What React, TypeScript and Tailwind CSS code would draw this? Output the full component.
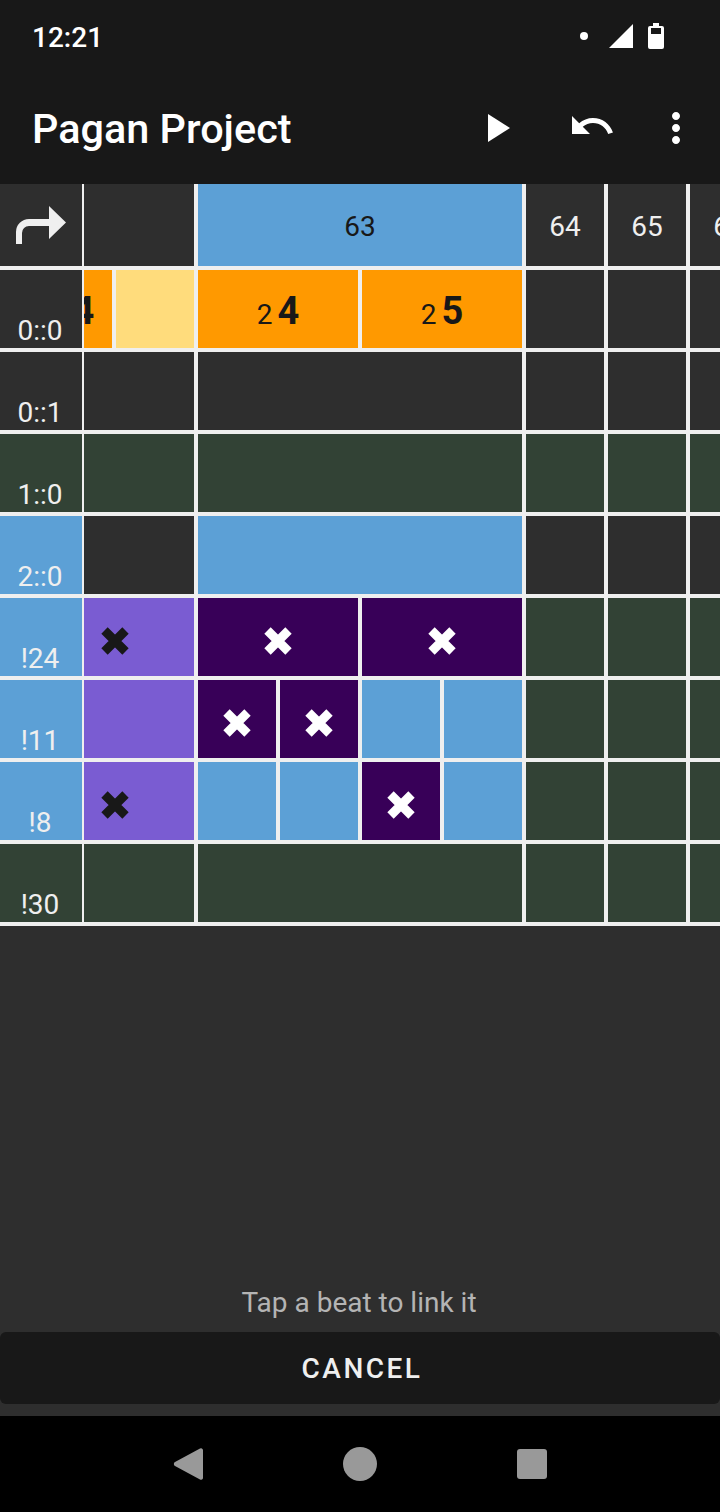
import type { ReactNode } from 'react'

type Tone = 'dark' | 'green' | 'blue' | 'orange' | 'pale' | 'purple' | 'plum'

const TONES: Record<Tone, string> = {
  dark: 'bg-[#2e2e2e]',
  green: 'bg-[#324235]',
  blue: 'bg-[#5ca0d6]',
  orange: 'bg-[#ff9900]',
  pale: 'bg-[#ffdc7c]',
  purple: 'bg-[#7a5cd2]',
  plum: 'bg-[#380058]',
}

function Cross({ color }: { color: string }) {
  return (
    <svg viewBox="0 0 28 28" className="w-7 h-7 mt-2 shrink-0" style={{ color }}>
      <path d="M3.5 3.5 24.5 24.5M24.5 3.5 3.5 24.5" stroke="currentColor" strokeWidth="9" fill="none" />
    </svg>
  )
}

function Note({ octave, pitch }: { octave: string; pitch: string }) {
  return (
    <span className="flex items-baseline text-[#181818] leading-none pt-[4px]">
      <span className="text-[28px] mr-[5px]">{octave}</span>
      <span className="text-[38px] font-bold">{pitch}</span>
    </span>
  )
}

function Cell({ tone, children, className = '' }: { tone: Tone; children?: ReactNode; className?: string }) {
  return (
    <div className={`${TONES[tone]} flex items-center justify-center overflow-hidden ${className}`}>
      {children}
    </div>
  )
}

function Label({ tone, text }: { tone: Tone; text: string }) {
  return (
    <div className={`${TONES[tone]} w-[82px] shrink-0 flex items-end justify-center text-[28px] leading-none pb-[3px] pr-[2px] text-[#efefef]`}>
      {text}
    </div>
  )
}

// one grid row: label, the scrolled-off beat, beat 63, then the three plain columns
function Row({ label, labelTone, first, wide, rest }: {
  label: string
  labelTone: Tone
  first: ReactNode
  wide: ReactNode
  rest: Tone
}) {
  return (
    <div className="flex h-[78px]">
      <Label tone={labelTone} text={label} />
      <div className="w-[110px] shrink-0 ml-[2px] flex gap-1">{first}</div>
      <div className="w-[324px] shrink-0 ml-1 flex gap-1">{wide}</div>
      <Cell tone={rest} className="w-[78px] shrink-0 ml-1" />
      <Cell tone={rest} className="w-[78px] shrink-0 ml-1" />
      <Cell tone={rest} className="w-[78px] shrink-0 ml-1" />
    </div>
  )
}

export default function App() {
  return (
    <div className="w-[720px] h-[1512px] flex flex-col overflow-hidden bg-[#2e2e2e] font-['Roboto',sans-serif]">
      {/* Status bar */}
      <div className="h-[72px] bg-[#181818] flex items-center pl-[32px] pr-[56px] text-white">
        <span className="text-[28px] font-medium leading-none pt-[3px]">12:21</span>
        <svg viewBox="0 0 8 8" className="w-2 h-2 ml-auto"><circle cx="4" cy="4" r="4" fill="#fff" /></svg>
        <svg viewBox="0 0 24 24" className="w-6 h-6 ml-[21px]"><path d="M24 0V24H0Z" fill="#fff" /></svg>
        <svg viewBox="0 0 16 26" className="w-4 h-[26px] ml-[15px]">
          <path fillRule="evenodd" d="M5 0h6v3h3a2 2 0 0 1 2 2v19a2 2 0 0 1-2 2H2a2 2 0 0 1-2-2V5a2 2 0 0 1 2-2h3ZM3 5v6h10V5Z" fill="#fff" />
        </svg>
      </div>

      {/* Toolbar */}
      <div className="h-[112px] bg-[#181818] flex items-center pl-[32px] text-white">
        <span className="text-[41.4px] font-medium leading-none pt-[4px]">Pagan Project</span>
        <svg viewBox="0 0 24 24" className="w-12 h-12 ml-auto fill-white"><path d="M8 5v14l11-7z" /></svg>
        <svg viewBox="0 0 24 24" className="w-12 h-12 ml-[48px] -mt-1 fill-white">
          <path d="M12.5 8c-2.65 0-5.05.99-6.9 2.6L2 7v9h9l-3.62-3.62c1.39-1.16 3.16-1.88 5.12-1.88 3.54 0 6.55 2.31 7.6 5.5l2.37-.78C21.08 11.03 17.15 8 12.5 8z" />
        </svg>
        <svg viewBox="0 0 24 24" className="w-12 h-12 ml-9 mr-5 fill-white">
          <path d="M12 8c1.1 0 2-.9 2-2s-.9-2-2-2-2 .9-2 2 .9 2 2 2zm0 2c-1.1 0-2 .9-2 2s.9 2 2 2 2-.9 2-2-.9-2-2-2zm0 6c-1.1 0-2 .9-2 2s.9 2 2 2 2-.9 2-2-.9-2-2-2z" />
        </svg>
      </div>

      {/* Table */}
      <div className="bg-[#efefef] flex flex-col gap-1 pb-1 overflow-hidden">
        <div className="flex h-[82px] text-[28px] text-[#efefef]">
          <Cell tone="dark" className="w-[82px] shrink-0">
            <svg viewBox="0 0 82 82" className="w-full h-full">
              <path d="M16 60V48a13 13 0 0 1 13-13h20V22l17 16.500-17 16.500V42H29a7 7 0 0 0-7 7v11Z" fill="#efefef" />
            </svg>
          </Cell>
          <Cell tone="dark" className="w-[110px] shrink-0 ml-[2px]" />
          <Cell tone="blue" className="w-[324px] shrink-0 ml-1 pt-1 text-[#181818]">63</Cell>
          <Cell tone="dark" className="w-[78px] shrink-0 ml-1 pt-1">64</Cell>
          <Cell tone="dark" className="w-[78px] shrink-0 ml-1 pt-1">65</Cell>
          <Cell tone="dark" className="w-[78px] shrink-0 ml-1 pt-1">66</Cell>
        </div>

        <Row
          label="0::0"
          labelTone="dark"
          rest="dark"
          first={
            <>
              <Cell tone="orange" className="w-7 shrink-0 !justify-end">
                <div className="w-[78px] shrink-0 flex justify-center">
                  <Note octave="2" pitch="4" />
                </div>
              </Cell>
              <Cell tone="pale" className="flex-1" />
            </>
          }
          wide={
            <>
              <Cell tone="orange" className="flex-1"><Note octave="2" pitch="4" /></Cell>
              <Cell tone="orange" className="flex-1"><Note octave="2" pitch="5" /></Cell>
            </>
          }
        />
        <Row label="0::1" labelTone="dark" rest="dark" first={<Cell tone="dark" className="flex-1" />} wide={<Cell tone="dark" className="flex-1" />} />
        <Row label="1::0" labelTone="green" rest="green" first={<Cell tone="green" className="flex-1" />} wide={<Cell tone="green" className="flex-1" />} />
        <Row label="2::0" labelTone="blue" rest="dark" first={<Cell tone="dark" className="flex-1" />} wide={<Cell tone="blue" className="flex-1" />} />
        <Row
          label="!24"
          labelTone="blue"
          rest="green"
          first={<Cell tone="purple" className="flex-1 !justify-start pl-[17px]"><Cross color="#181818" /></Cell>}
          wide={
            <>
              <Cell tone="plum" className="flex-1"><Cross color="#fff" /></Cell>
              <Cell tone="plum" className="flex-1"><Cross color="#fff" /></Cell>
            </>
          }
        />
        <Row
          label="!11"
          labelTone="blue"
          rest="green"
          first={<Cell tone="purple" className="flex-1" />}
          wide={
            <>
              <Cell tone="plum" className="flex-1"><Cross color="#fff" /></Cell>
              <Cell tone="plum" className="flex-1"><Cross color="#fff" /></Cell>
              <Cell tone="blue" className="flex-1" />
              <Cell tone="blue" className="flex-1" />
            </>
          }
        />
        <Row
          label="!8"
          labelTone="blue"
          rest="green"
          first={<Cell tone="purple" className="flex-1 !justify-start pl-[17px]"><Cross color="#181818" /></Cell>}
          wide={
            <>
              <Cell tone="blue" className="flex-1" />
              <Cell tone="blue" className="flex-1" />
              <Cell tone="plum" className="flex-1"><Cross color="#fff" /></Cell>
              <Cell tone="blue" className="flex-1" />
            </>
          }
        />
        <Row label="!30" labelTone="green" rest="green" first={<Cell tone="green" className="flex-1" />} wide={<Cell tone="green" className="flex-1" />} />
      </div>

      {/* Link hint + cancel */}
      <div className="flex-1 flex flex-col justify-end items-stretch pb-3">
        <p className="text-center text-[28px] leading-none text-[#b4b4b4] mb-[15px] pr-[2px]">Tap a beat to link it</p>
        <button type="button" className="h-[72px] rounded-md bg-[#181818] text-[#efefef] text-[28px] font-medium tracking-[2.5px] pl-[4px] pt-[2px]">
          CANCEL
        </button>
      </div>

      {/* Nav bar */}
      <div className="h-[96px] bg-black flex items-center justify-center shrink-0">
        <svg viewBox="0 0 30 34" className="w-[30px] h-[34px] mr-[140px]">
          <path d="M27 1.500 2 15a2.300 2.300 0 0 0 0 4l25 13.500a2 2 0 0 0 3-1.500V3a2 2 0 0 0-3-1.500Z" fill="#999" />
        </svg>
        <svg viewBox="0 0 34 34" className="w-[34px] h-[34px] mr-[140px]"><circle cx="17" cy="17" r="17" fill="#999" /></svg>
        <div className="w-[30px] h-[30px] rounded-[3px] bg-[#999]" />
      </div>
    </div>
  )
}
